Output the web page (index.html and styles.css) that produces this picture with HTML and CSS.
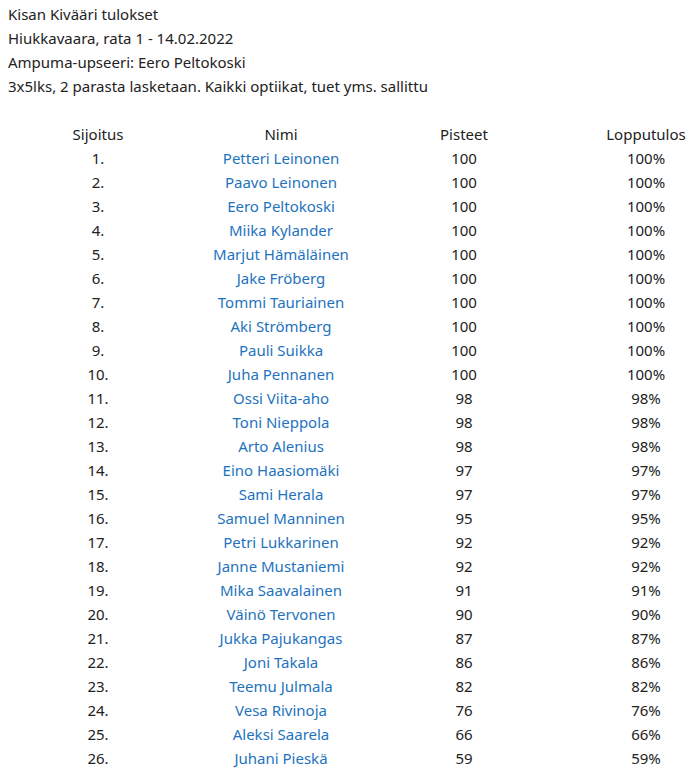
FILE: index.html
```html
<!DOCTYPE html>
<html lang="fi">
<head>
<meta charset="utf-8">
<title>Kisan Kivääri tulokset</title>
<link rel="stylesheet" href="styles.css">
</head>
<body>
<div class="intro">
  <div class="line">Kisan Kivääri tulokset</div>
  <div class="line">Hiukkavaara, rata 1 - 14.02.2022</div>
  <div class="line">Ampuma-upseeri: Eero Peltokoski</div>
  <div class="line">3x5lks, 2 parasta lasketaan. Kaikki optiikat, tuet yms. sallittu</div>
</div>
<div class="results">
  <div class="row head"><span>Sijoitus</span><span>Nimi</span><span>Pisteet</span><span class="pct">Lopputulos</span></div>
  <div class="row"><span>1.</span><a href="#">Petteri Leinonen</a><span>100</span><span class="pct">100%</span></div>
  <div class="row"><span>2.</span><a href="#">Paavo Leinonen</a><span>100</span><span class="pct">100%</span></div>
  <div class="row"><span>3.</span><a href="#">Eero Peltokoski</a><span>100</span><span class="pct">100%</span></div>
  <div class="row"><span>4.</span><a href="#">Miika Kylander</a><span>100</span><span class="pct">100%</span></div>
  <div class="row"><span>5.</span><a href="#">Marjut Hämäläinen</a><span>100</span><span class="pct">100%</span></div>
  <div class="row"><span>6.</span><a href="#">Jake Fröberg</a><span>100</span><span class="pct">100%</span></div>
  <div class="row"><span>7.</span><a href="#">Tommi Tauriainen</a><span>100</span><span class="pct">100%</span></div>
  <div class="row"><span>8.</span><a href="#">Aki Strömberg</a><span>100</span><span class="pct">100%</span></div>
  <div class="row"><span>9.</span><a href="#">Pauli Suikka</a><span>100</span><span class="pct">100%</span></div>
  <div class="row"><span>10.</span><a href="#">Juha Pennanen</a><span>100</span><span class="pct">100%</span></div>
  <div class="row"><span>11.</span><a href="#">Ossi Viita-aho</a><span>98</span><span class="pct">98%</span></div>
  <div class="row"><span>12.</span><a href="#">Toni Nieppola</a><span>98</span><span class="pct">98%</span></div>
  <div class="row"><span>13.</span><a href="#">Arto Alenius</a><span>98</span><span class="pct">98%</span></div>
  <div class="row"><span>14.</span><a href="#">Eino Haasiomäki</a><span>97</span><span class="pct">97%</span></div>
  <div class="row"><span>15.</span><a href="#">Sami Herala</a><span>97</span><span class="pct">97%</span></div>
  <div class="row"><span>16.</span><a href="#">Samuel Manninen</a><span>95</span><span class="pct">95%</span></div>
  <div class="row"><span>17.</span><a href="#">Petri Lukkarinen</a><span>92</span><span class="pct">92%</span></div>
  <div class="row"><span>18.</span><a href="#">Janne Mustaniemi</a><span>92</span><span class="pct">92%</span></div>
  <div class="row"><span>19.</span><a href="#">Mika Saavalainen</a><span>91</span><span class="pct">91%</span></div>
  <div class="row"><span>20.</span><a href="#">Väinö Tervonen</a><span>90</span><span class="pct">90%</span></div>
  <div class="row"><span>21.</span><a href="#">Jukka Pajukangas</a><span>87</span><span class="pct">87%</span></div>
  <div class="row"><span>22.</span><a href="#">Joni Takala</a><span>86</span><span class="pct">86%</span></div>
  <div class="row"><span>23.</span><a href="#">Teemu Julmala</a><span>82</span><span class="pct">82%</span></div>
  <div class="row"><span>24.</span><a href="#">Vesa Rivinoja</a><span>76</span><span class="pct">76%</span></div>
  <div class="row"><span>25.</span><a href="#">Aleksi Saarela</a><span>66</span><span class="pct">66%</span></div>
  <div class="row"><span>26.</span><a href="#">Juhani Pieskä</a><span>59</span><span class="pct">59%</span></div>
</div>
</body>
</html>
```

FILE: styles.css
```css
html, body {
  margin: 0;
}
body {
  padding: 2px 8px 0 8px;
  font-family: "Noto Sans", "Open Sans", sans-serif;
  font-size: 15px;
  line-height: 24px;
  color: #222222;
  background: #ffffff;
}
.intro {
  margin-bottom: 24px;
}
.line {
  white-space: nowrap;
}
.results {
  display: flex;
  flex-direction: column;
}
.row {
  display: grid;
  grid-template-columns: 180px 186px 180px 1fr;
  height: 24px;
  text-align: center;
  white-space: nowrap;
}
.row .pct {
  padding-left: 50px;
}
.row a {
  color: #1e73be;
  text-decoration: none;
}
```
